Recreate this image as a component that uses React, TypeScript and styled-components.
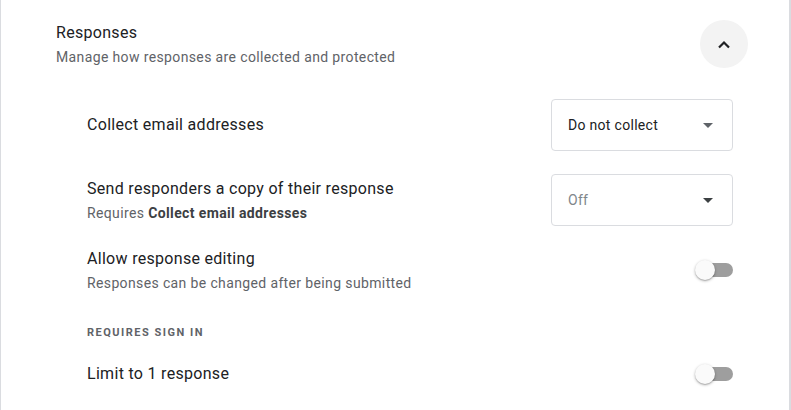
import React from "react";
import styled, { createGlobalStyle } from "styled-components";

const Global = createGlobalStyle`
  html, body { margin: 0; padding: 0; background: #fff; }
  body { font-family: Roboto, "Liberation Sans", Arial, sans-serif; color: #202124; }
  * { box-sizing: border-box; }
`;

const Card = styled.section`
  width: 791px;
  height: 410px;
  border-left: 1px solid #dadce0;
  border-right: 2px solid #dadce0;
  background: #fff;
  overflow: hidden;
`;

const Header = styled.div`
  display: flex;
  align-items: center;
  justify-content: space-between;
  padding: 20px 41px 0 55px;
`;

const HeaderText = styled.div`
  display: flex;
  flex-direction: column;
  gap: 2px;
`;

const Title = styled.div`
  font-size: 16px;
  line-height: 24px;
  letter-spacing: 0.3px;
  color: #202124;
`;

const Sub = styled.div`
  font-size: 14px;
  line-height: 20px;
  color: #5f6368;
  letter-spacing: 0.37px;
  b { font-weight: 700; color: #3c4043; }
`;

const RoundButton = styled.button`
  width: 48px;
  height: 48px;
  border-radius: 50%;
  border: none;
  background: #f3f3f3;
  display: flex;
  align-items: center;
  justify-content: center;
  padding: 0;
`;

const Body = styled.div`
  display: flex;
  flex-direction: column;
  padding: 31px 56px 0 86px;
`;

const Row = styled.div<{ $mt?: number }>`
  display: flex;
  align-items: center;
  justify-content: space-between;
  margin-top: ${(p) => p.$mt ?? 0}px;
`;

const RowText = styled.div`
  display: flex;
  flex-direction: column;
  gap: 2px;
`;

const Select = styled.div<{ $disabled?: boolean }>`
  width: 182px;
  height: 52px;
  border: 1px solid #dadce0;
  border-radius: 4px;
  display: flex;
  align-items: center;
  justify-content: space-between;
  padding: 0 19px 0 16px;
  font-size: 14px;
  letter-spacing: 0.3px;
  color: ${(p) => (p.$disabled ? "#80868b" : "#202124")};
`;

const Caret = styled.span<{ $disabled?: boolean }>`
  width: 0;
  height: 0;
  border-left: 5px solid transparent;
  border-right: 5px solid transparent;
  border-top: 5px solid ${(p) => (p.$disabled ? "#3c4043" : "#5f6368")};
  margin-top: 1px;
`;

const Switch = styled.div`
  position: relative;
  width: 38px;
  height: 20px;
  display: flex;
  align-items: center;
  justify-content: flex-end;
`;

const Track = styled.div`
  width: 34px;
  height: 14px;
  border-radius: 7px;
  background: #9e9e9e;
`;

const Thumb = styled.div`
  position: absolute;
  left: 0;
  top: 0;
  width: 20px;
  height: 20px;
  border-radius: 50%;
  background: #fafafa;
  box-shadow: 0 1px 3px rgba(0, 0, 0, 0.3), 0 1px 1px rgba(0, 0, 0, 0.14);
`;

const SectionLabel = styled.div`
  margin-top: 32px;
  font-size: 11px;
  line-height: 16px;
  font-weight: 700;
  letter-spacing: 1.5px;
  color: #5f6368;
  text-transform: uppercase;
`;

const Toggle = () => (
  <Switch>
    <Track />
    <Thumb />
  </Switch>
);

export default function App() {
  return (
    <>
      <Global />
      <Card>
        <Header>
          <HeaderText>
            <Title>Responses</Title>
            <Sub>Manage how responses are collected and protected</Sub>
          </HeaderText>
          <RoundButton aria-label="Collapse">
            <svg width="14" height="9" viewBox="0 0 14 9">
              <path d="M2 7.5 L7 2.5 L12 7.5" fill="none" stroke="#202124" strokeWidth="2.2" />
            </svg>
          </RoundButton>
        </Header>
        <Body>
          <Row>
            <Title>Collect email addresses</Title>
            <Select>
              Do not collect
              <Caret />
            </Select>
          </Row>
          <Row $mt={23}>
            <RowText>
              <Title>Send responders a copy of their response</Title>
              <Sub>
                Requires <b>Collect email addresses</b>
              </Sub>
            </RowText>
            <Select $disabled>
              Off
              <Caret $disabled />
            </Select>
          </Row>
          <Row $mt={21}>
            <RowText>
              <Title>Allow response editing</Title>
              <Sub>Responses can be changed after being submitted</Sub>
            </RowText>
            <Toggle />
          </Row>
          <SectionLabel>Requires sign in</SectionLabel>
          <Row $mt={21}>
            <Title>Limit to 1 response</Title>
            <Toggle />
          </Row>
        </Body>
      </Card>
    </>
  );
}
